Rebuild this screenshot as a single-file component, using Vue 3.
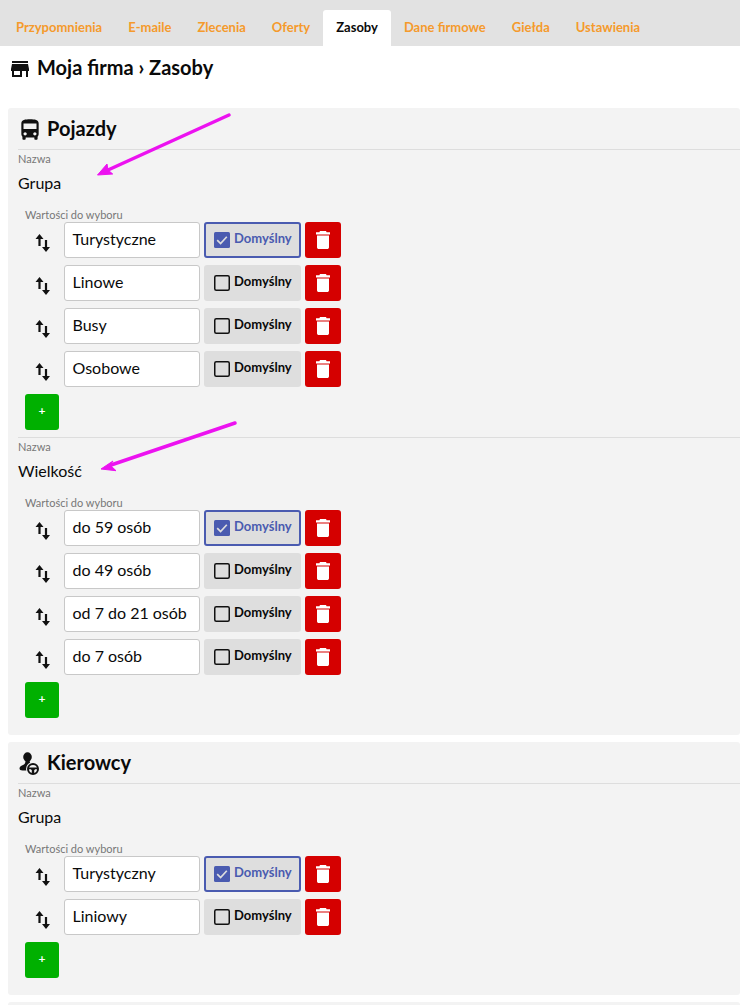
<script setup>
const tabs = [
  "Przypomnienia",
  "E-maile",
  "Zlecenia",
  "Oferty",
  "Zasoby",
  "Dane firmowe",
  "Giełda",
  "Ustawienia",
];

const panels = [
  {
    title: "Pojazdy",
    icon: "bus",
    fields: [
      { name: "Grupa", values: ["Turystyczne", "Linowe", "Busy", "Osobowe"] },
      { name: "Wielkość", values: ["do 59 osób", "do 49 osób", "od 7 do 21 osób", "do 7 osób"] },
    ],
  },
  {
    title: "Kierowcy",
    icon: "driver",
    fields: [{ name: "Grupa", values: ["Turystyczny", "Liniowy"] }],
  },
];
</script>

<template>
  <div class="page">
    <nav class="tabs">
      <a v-for="tab in tabs" :key="tab" :class="['tab', { active: tab === 'Zasoby' }]">{{ tab }}</a>
    </nav>

    <h1 class="page-title">
      <svg class="store-icon" viewBox="0 0 24 24">
        <path d="M20 4H4v2h16V4zm1 10v-2l-1-5H4l-1 5v2h1v6h10v-6h4v6h2v-6h1zm-9 4H6v-4h6v4z" />
      </svg>
      Moja firma › Zasoby
    </h1>

    <section v-for="panel in panels" :key="panel.title" class="panel">
      <h2 class="panel-title">
        <svg v-if="panel.icon === 'bus'" class="panel-icon bus" viewBox="0 0 24 24">
          <path d="M4 16c0 .88.39 1.67 1 2.22V20c0 .55.45 1 1 1h1c.55 0 1-.45 1-1v-1h8v1c0 .55.45 1 1 1h1c.55 0 1-.45 1-1v-1.78c.61-.55 1-1.34 1-2.22V6c0-3.5-3.58-4-8-4s-8 .5-8 4v10zm3.5 1c-.83 0-1.5-.67-1.5-1.5S6.670 14 7.500 14s1.500.67 1.500 1.500S8.330 17 7.500 17zm9 0c-.83 0-1.500-.67-1.500-1.500s.67-1.500 1.500-1.500 1.500.67 1.500 1.500-.67 1.500-1.500 1.500zm1.500-6H6V6h12v5z" />
        </svg>
        <svg v-else class="panel-icon driver" viewBox="0 0 26 26">
          <ellipse cx="10.500" cy="7" rx="4.300" ry="4.700" />
          <path d="M8.500 10.500h4l.8 3.300-3 6.700H5.500c-2 0-3-1-3-2.300 0-1.800 2.500-2.700 4.500-3.700 1-.6 1.500-2 1.500-4z" />
          <circle cx="16" cy="19" r="7" fill="#f3f3f3" />
          <circle cx="16" cy="19" r="5" fill="none" stroke="#111" stroke-width="2" />
          <path d="M11 17.500h10v1.700h-2.800l-1 1v3.300h-2.400v-3.300l-1-1H11z" />
        </svg>
        {{ panel.title }}
      </h2>

      <div v-for="field in panel.fields" :key="field.name" class="field">
        <div class="small-label">Nazwa</div>
        <div class="field-name">{{ field.name }}</div>

        <div class="values">
          <div class="small-label">Wartości do wyboru</div>
          <div v-for="(value, index) in field.values" :key="value" class="value-row">
            <svg class="sort-icon" viewBox="0 0 14 18">
              <path d="M3.500 0 7.500 5H4.600v7H2.400V5H-.5z" />
              <path d="M8.900 6h2.200v7H14l-4 5-4-5h2.900z" />
            </svg>
            <div class="value-input">{{ value }}</div>
            <button :class="['default-btn', { checked: index === 0 }]">
              <svg class="check" viewBox="0 0 16 16">
                <template v-if="index === 0">
                  <rect width="16" height="16" rx="1.500" fill="#4a5bb0" />
                  <path d="M3.200 8.200 6.600 11.600 12.800 4.800" fill="none" stroke="#dedede" stroke-width="1.700" />
                </template>
                <rect v-else x="0.750" y="0.750" width="14.500" height="14.500" rx="1.500" fill="none" stroke="#111" stroke-width="1.500" />
              </svg>
              <span class="default-text">Domyślny</span>
            </button>
            <button class="delete-btn">
              <svg class="trash" viewBox="0 0 14 18">
                <path d="M4 0h6l.6 1.200H14v2.200H0V1.200h3.400zM1 4.600h12v11.600c0 1-.8 1.800-1.800 1.800H2.800c-1 0-1.800-.8-1.800-1.800z" />
              </svg>
            </button>
          </div>
          <button class="add-btn">+</button>
        </div>
      </div>
    </section>
    <div class="panel-stub"></div>

    <svg class="arrows" viewBox="0 0 740 1005">
      <path d="M229 115 108 170" />
      <path d="M235 423 111 465" />
      <polygon points="97.500,175 107,164 108,170 112.700,174" />
      <polygon points="101,469 113,461 110,465 116,470.700" />
    </svg>
  </div>
</template>

<style>
html,
body {
  margin: 0;
  background: #fff;
}
</style>

<style scoped>
.page {
  position: relative;
  height: 1005px;
  overflow: hidden;
  font-family: Lato, "Liberation Sans", sans-serif;
  color: #0a0a0a;
}

.tabs {
  display: flex;
  align-items: flex-end;
  height: 46px;
  padding-left: 3px;
  background: #e2e2e2;
}

.tab {
  padding: 0 13px;
  height: 36px;
  line-height: 34px;
  font-size: 13px;
  font-weight: 700;
  color: #f59a2c;
  border-radius: 3px 3px 0 0;
}

.tab.active {
  background: #fff;
  color: #0a0a0a;
}

.page-title {
  display: flex;
  align-items: center;
  gap: 5px;
  height: 42px;
  margin: 0 0 20px;
  padding-left: 8px;
  font-size: 20px;
  font-weight: 700;
}

.store-icon {
  width: 24px;
  height: 24px;
  margin-top: 4px;
  fill: #111;
}

.panel {
  margin: 0 0 7px 8px;
  padding: 0 0 10px 10px;
  background: #f3f3f3;
  border-radius: 3px;
}

.panel-title {
  display: flex;
  align-items: center;
  gap: 4px;
  box-sizing: border-box;
  height: 42px;
  margin: 0;
  padding-bottom: 1px;
  font-size: 20px;
  font-weight: 700;
  border-bottom: 1px solid #ddd;
}

.panel-icon {
  width: 26px;
  height: 26px;
  margin-left: -1px;
  fill: #111;
}

.panel-icon.bus {
  margin-top: 4px;
}

.panel-icon.driver {
  margin-top: 1px;
}

.field + .field {
  border-top: 1px solid #ddd;
}

.small-label {
  height: 15px;
  font-size: 11px;
  line-height: 15px;
  color: #777;
}

.field {
  padding-top: 1px;
}

.field-name {
  height: 26px;
  margin: 4px 0 11px;
  font-size: 16px;
  line-height: 26px;
}

.values {
  padding: 0 0 7px 7px;
}

.value-row {
  display: flex;
  gap: 4px;
  height: 36px;
  margin-bottom: 7px;
}

.sort-icon {
  align-self: center;
  width: 14px;
  height: 18px;
  margin: 6px 10px 0 11px;
  overflow: visible;
  fill: #111;
}

.value-input {
  box-sizing: border-box;
  width: 136px;
  padding: 0 7.500px;
  font-size: 16px;
  line-height: 31px;
  background: #fff;
  border: 1px solid #c8c8c8;
  border-radius: 3px;
}

.default-btn {
  display: flex;
  align-items: center;
  box-sizing: border-box;
  width: 97px;
  padding: 0 0 0 10px;
  gap: 4px;
  font: inherit;
  color: #0a0a0a;
  background: #dedede;
  border: 0;
  border-radius: 3px;
}

.default-btn.checked {
  color: #4a5bb0;
  border: 2px solid #4a5bb0;
  padding-left: 8px;
}

.check {
  width: 16px;
  height: 16px;
}

.default-text {
  margin-top: -5px;
  font-size: 13px;
  font-weight: 700;
}

.delete-btn {
  display: flex;
  align-items: center;
  justify-content: center;
  width: 36px;
  padding: 0;
  background: #d50000;
  border: 0;
  border-radius: 3px;
}

.trash {
  width: 14px;
  height: 18px;
  fill: #fff;
}

.add-btn {
  display: block;
  width: 34px;
  height: 36px;
  padding: 0 0 4px;
  font-family: inherit;
  font-size: 12px;
  font-weight: 700;
  color: #fff;
  background: #00b000;
  border: 0;
  border-radius: 3px;
}

.panel-stub {
  height: 20px;
  margin-left: 8px;
  background: #f3f3f3;
  border-radius: 3px;
}

.arrows {
  position: absolute;
  inset: 0;
  width: 740px;
  height: 1005px;
  pointer-events: none;
}

.arrows path {
  fill: none;
  stroke: #ec12f0;
  stroke-width: 3.500;
  stroke-linecap: round;
}

.arrows polygon {
  fill: #ec12f0;
  stroke: #ec12f0;
  stroke-width: 1;
}
</style>
